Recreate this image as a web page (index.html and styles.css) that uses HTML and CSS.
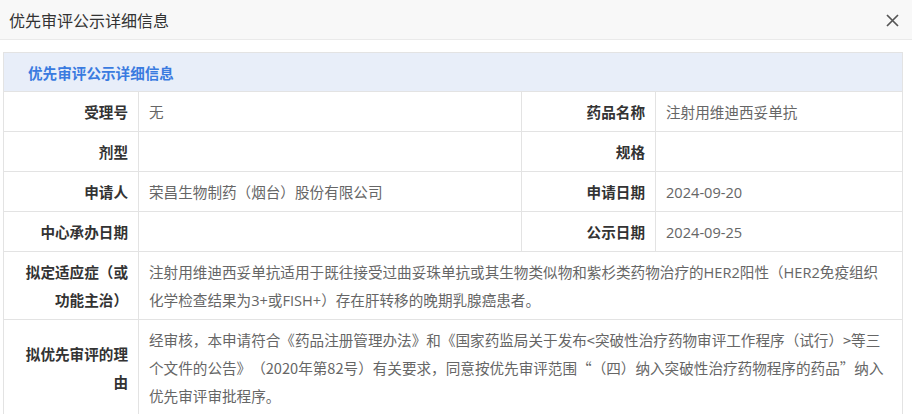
FILE: index.html
```html
<!DOCTYPE html>
<html lang="zh-CN">
<head>
<meta charset="UTF-8">
<meta name="viewport" content="width=device-width, initial-scale=1.0">
<title>优先审评公示详细信息</title>
<link rel="stylesheet" href="styles.css">
</head>
<body>
<div class="modal">
  <div class="modal-header">
    <span class="modal-title">优先审评公示详细信息</span>
    <span class="modal-close">
      <svg width="13" height="13" viewBox="0 0 13 13"><path d="M1 1L12 12M12 1L1 12" stroke="#555" stroke-width="1.7" fill="none"/></svg>
    </span>
  </div>

  <div class="modal-body">
    <table class="detail-table">
      <colgroup>
        <col class="col-label">
        <col class="col-value">
        <col class="col-label2">
        <col>
      </colgroup>
      <tr class="table-title">
        <td colspan="4">优先审评公示详细信息</td>
      </tr>
      <tr>
        <td class="label">受理号</td>
        <td class="value">无</td>
        <td class="label">药品名称</td>
        <td class="value">注射用维迪西妥单抗</td>
      </tr>
      <tr>
        <td class="label">剂型</td>
        <td class="value"></td>
        <td class="label">规格</td>
        <td class="value"></td>
      </tr>
      <tr>
        <td class="label">申请人</td>
        <td class="value">荣昌生物制药（烟台）股份有限公司</td>
        <td class="label">申请日期</td>
        <td class="value">2024-09-20</td>
      </tr>
      <tr>
        <td class="label">中心承办日期</td>
        <td class="value"></td>
        <td class="label">公示日期</td>
        <td class="value">2024-09-25</td>
      </tr>
      <tr>
        <td class="label">拟定适应症（或功能主治）</td>
        <td class="value wide" colspan="3">注射用维迪西妥单抗适用于既往接受过曲妥珠单抗或其生物类似物和紫杉类药物治疗的HER2阳性（HER2免疫组织化学检查结果为3+或FISH+）存在肝转移的晚期乳腺癌患者。</td>
      </tr>
      <tr>
        <td class="label">拟优先审评的理由</td>
        <td class="value wide cjk" colspan="3">经审核，本申请符合《药品注册管理办法》和《国家药监局关于发布&lt;突破性治疗药物审评工作程序（试行）&gt;等三个文件的公告》（2020年第82号）有关要求，同意按优先审评范围“（四）纳入突破性治疗药物程序的药品”纳入优先审评审批程序。</td>
      </tr>
    </table>
  </div>
</div>
</body>
</html>
```

FILE: styles.css
```css
body {
  margin: 0;
  font-family: "Open Sans", "Noto Sans CJK SC", sans-serif;
  font-size: 14.6px;
  color: #333;
  background: #fff;
  text-spacing-trim: space-all;
}

.modal-header {
  display: flex;
  justify-content: space-between;
  align-items: center;
  height: 39px;
  padding: 0 13px 0 9px;
  background-color: #f8f8f8;
  border-bottom: 1px solid #eaeaea;
}

.modal-title {
  font-size: 16px;
  color: #333;
}

.modal-close {
  display: flex;
  margin-top: 2px;
}

.modal-body {
  padding: 12px 9px 0 3px;
}

.detail-table {
  width: 900px;
  border-collapse: collapse;
  table-layout: fixed;
}

.col-label {
  width: 135px;
}

.col-value {
  width: 383px;
}

.col-label2 {
  width: 134px;
}

.detail-table td {
  border: 1px solid #e3e3e3;
  line-height: 28px;
  padding: 6px 10px 5px;
  vertical-align: middle;
}

.table-title td {
  padding: 6px 10px 4px 24px;
  background-color: #e8eef9;
  color: #3a7be0;
  font-weight: bold;
}

.label {
  text-align: right;
  font-weight: bold;
  color: #333;
  padding-left: 16px !important;
}

.value {
  color: #666;
}

.wide {
  padding-right: 13px !important;
}

/* quotes need the CJK font to get full width */
.cjk {
  font-family: "Noto Sans CJK SC", sans-serif;
}
```
